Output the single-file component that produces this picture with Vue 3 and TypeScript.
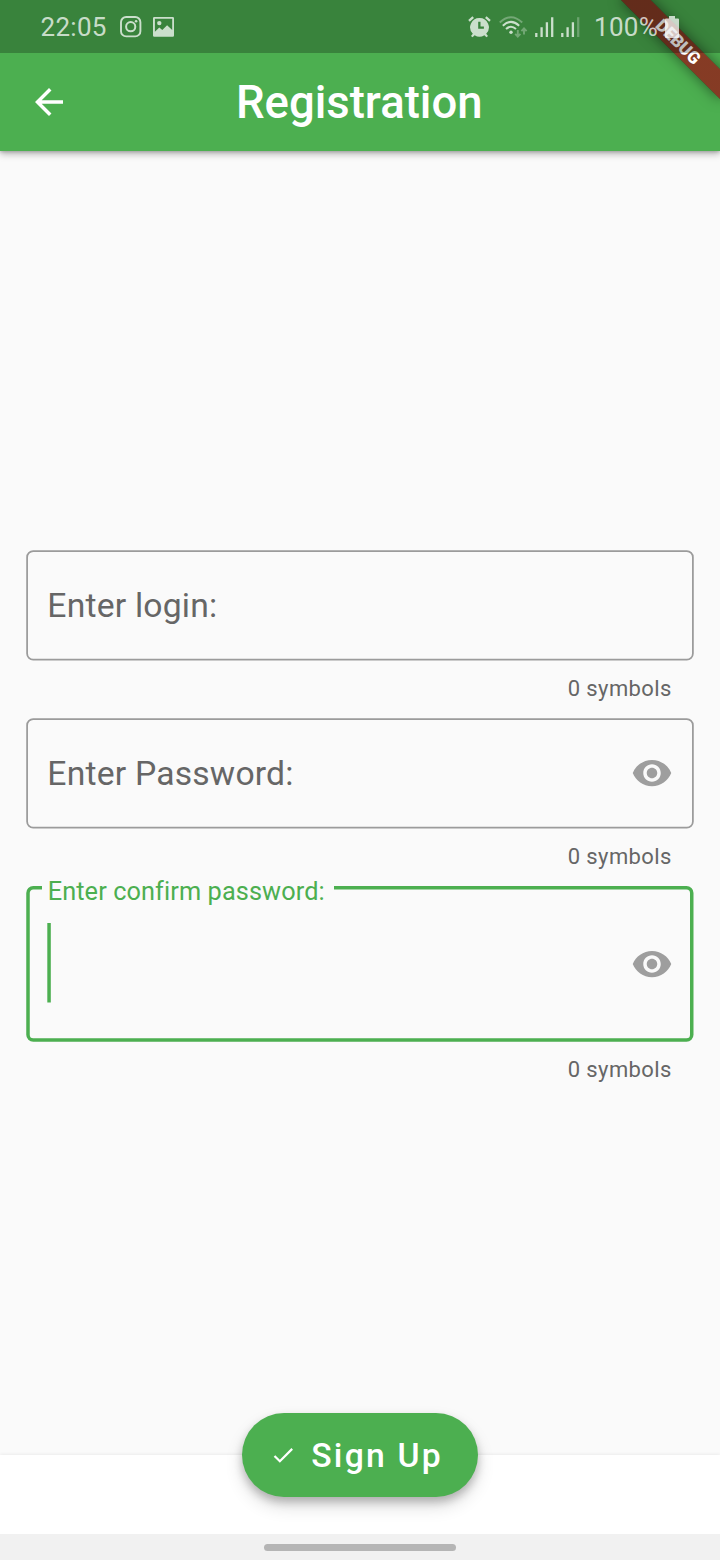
<script setup lang="ts">
interface Field {
  id: string
  label: string
  height: number
  secret: boolean
  focused: boolean
  counter: string
}

const fields: Field[] = [
  { id: 'login', label: 'Enter login:', height: 110.5, secret: false, focused: false, counter: '0 symbols' },
  { id: 'password', label: 'Enter Password:', height: 110.5, secret: true, focused: false, counter: '0 symbols' },
  { id: 'confirm', label: 'Enter confirm password:', height: 156, secret: true, focused: true, counter: '0 symbols' },
]
</script>

<template>
  <div class="screen">
    <div class="banner"><span>DEBUG</span></div>

    <header class="status">
      <span class="clock">22:05</span>
      <svg class="insta" width="22" height="22" viewBox="0 0 22 22" fill="none" stroke="currentColor">
        <rect x="1" y="1" width="19.4" height="19.4" rx="5.2" stroke-width="1.9" />
        <circle cx="10.7" cy="10.7" r="4.6" stroke-width="2" />
        <circle cx="16.1" cy="5.2" r="1.3" fill="currentColor" stroke="none" />
      </svg>
      <svg class="photo" width="22" height="21" viewBox="0 0 22 21" fill="currentColor">
        <path fill-rule="evenodd" d="M1.2 0H19.8Q21 0 21 1.2V18.6Q21 19.8 19.8 19.8H1.2Q0 19.8 0 18.6V1.2Q0 0 1.2 0ZM1.9 1.8V14.8L6.3 10.5L9.3 13.1L14.1 8.3L19.2 12.9V1.8Z" />
        <circle cx="6.3" cy="6.1" r="2.2" />
      </svg>
      <span class="spacer"></span>
      <svg class="alarm" width="24" height="22" viewBox="0 0 24 22">
        <path fill="currentColor" fill-rule="evenodd" d="M11.5 2A9.3 9.3 0 0 1 18.2 17.8L20 20L18.4 21.3L16.4 19.2A9.3 9.3 0 0 1 6.6 19.2L4.6 21.3L3 20L4.8 17.8A9.3 9.3 0 0 1 11.5 2ZM10.2 5.8V12.8H15.9V10.6H12.5V5.8Z" />
        <path d="M1 4.8L5.2 1.2M22 4.8L17.8 1.2" stroke="currentColor" stroke-width="2.4" fill="none" />
      </svg>
      <svg class="wifi" width="29" height="23" viewBox="0 0 29 23" fill="none" stroke="currentColor" stroke-width="2">
        <path opacity=".4" d="M.8 6.5Q12 -4 23.2 6.5" />
        <path d="M3.8 9.7Q12 2 20.2 9.7" />
        <path d="M7 13Q12 8.5 17 13" />
        <circle cx="12" cy="16.3" r="1.7" fill="currentColor" stroke="none" />
        <g opacity=".4" stroke-width="1.9"><path d="M18.8 14V20.5M16.2 17.8L18.8 20.6L21.4 17.8" /><path d="M25 18.5V12.5M22.4 15.2L25 12.4L27.6 15.2" /></g>
      </svg>
      <svg class="bars first" width="19" height="21" viewBox="0 0 19 21" stroke="currentColor" stroke-width="2.3">
        <path d="M1.3 16V20M6.6 10.2V20M11.9 5.2V20M17.2 .2V20" />
      </svg>
      <svg class="bars" width="19" height="21" viewBox="0 0 19 21" stroke="currentColor" stroke-width="2.3">
        <path d="M1.3 16V20M6.6 10.2V20M11.9 5.2V20" /><path opacity=".35" d="M17.2 .2V20" />
      </svg>
      <span class="percent">100%</span>
      <svg class="battery" width="15" height="22" viewBox="0 0 15 22" fill="currentColor">
        <path d="M4 0H10V2.5H13Q14 2.5 14 3.5V21Q14 22 13 22H1Q0 22 0 21V3.5Q0 2.5 1 2.5H4Z" />
      </svg>
    </header>

    <div class="appbar">
      <svg class="back" width="42" height="42" viewBox="0 0 24 24" fill="#fff">
        <path d="M20 11H7.83l5.59-5.59L12 4l-8 8 8 8 1.41-1.41L7.83 13H20v-2z" />
      </svg>
      <h1>Registration</h1>
    </div>

    <main>
      <div v-for="f in fields" :key="f.id" class="field" :class="{ focused: f.focused }">
        <div class="box" :style="{ height: f.height + 'px' }">
          <svg class="outline" width="668" :height="f.height" fill="none">
            <path v-if="f.focused" d="M308 1.75H660.5a5.25 5.25 0 0 1 5.25 5.25V148.7a5.25 5.25 0 0 1-5.25 5.25H7.25a5.25 5.25 0 0 1-5.25-5.25V7a5.25 5.25 0 0 1 5.25-5.25H16" stroke="#4caf50" stroke-width="3.5" />
            <rect v-else x="1.1" y="1.05" width="665.8" height="108.6" rx="6.1" stroke="#9b9b9b" stroke-width="1.75" />
          </svg>
          <span class="label">{{ f.label }}</span>
          <svg v-if="f.focused" class="caret" width="4" height="80"><rect x=".3" width="3.5" height="79.5" fill="#4caf50" /></svg>
          <svg v-if="f.secret" class="eye" width="42" height="42" viewBox="0 0 24 24" fill="#9e9e9e">
            <path d="M12 4.5C7 4.5 2.73 7.61 1 12c1.73 4.39 6 7.5 11 7.5s9.27-3.11 11-7.5c-1.73-4.39-6-7.5-11-7.5zM12 17c-2.76 0-5-2.24-5-5s2.24-5 5-5 5 2.24 5 5-2.24 5-5 5zm0-8c-1.66 0-3 1.34-3 3s1.34 3 3 3 3-1.34 3-3-1.34-3-3-3z" />
          </svg>
        </div>
        <div class="counter">{{ f.counter }}</div>
      </div>
    </main>

    <footer class="bottombar">
      <button class="signup" type="button">
        <svg width="26.25" height="26.25" viewBox="0 0 24 24" fill="#fff">
          <path d="M9 16.17L4.83 12l-1.42 1.41L9 19 21 7l-1.41-1.41z" />
        </svg>
        <span>Sign Up</span>
      </button>
    </footer>
    <div class="navbar"><span class="handle"></span></div>
  </div>
</template>

<style>
body {
  margin: 0;
  background: #fafafa;
}
</style>

<style scoped>
.screen {
  position: relative;
  display: flex;
  flex-direction: column;
  width: 720px;
  height: 1560px;
  overflow: hidden;
  background: #fafafa;
  font-family: Roboto, "Liberation Sans", sans-serif;
}
.screen svg {
  display: block;
  flex: none;
}
.status {
  position: relative;
  z-index: 4;
  display: flex;
  align-items: flex-start;
  box-sizing: border-box;
  height: 53px;
  padding: 16px 40px 0 40.5px;
  background: rgba(0, 0, 0, 0.25);
  color: rgba(255, 255, 255, 0.74);
  font-size: 26px;
  line-height: 22px;
}
.clock {
  width: 79px;
  letter-spacing: 0.3px;
}
.photo {
  margin: 1px 0 0 11px;
}
.spacer {
  flex: 1;
}
.wifi {
  margin-left: 7.5px;
}
.bars {
  margin: 1px 0 0 7px;
}
.percent {
  width: 71px;
  margin-left: 14px;
  letter-spacing: 0.3px;
  white-space: nowrap;
}
.appbar {
  position: relative;
  z-index: 2;
  display: flex;
  align-items: center;
  box-sizing: border-box;
  height: 151px;
  margin-top: -53px;
  padding: 53px 28px 0;
  background: #4caf50;
  box-shadow: 0 3px 7px rgba(0, 0, 0, 0.28), 0 1px 3px rgba(0, 0, 0, 0.18);
}
h1 {
  flex: 1;
  margin: 0 43.5px 0 0;
  padding-top: 2px;
  color: #fff;
  font-size: 45.5px;
  font-weight: 500;
  line-height: 54px;
  text-align: center;
}
.banner {
  position: absolute;
  z-index: 3;
  top: 49px;
  left: 650px;
  display: flex;
  align-items: center;
  justify-content: center;
  width: 140px;
  height: 20.5px;
  background: linear-gradient(rgba(183, 28, 28, 0.63), rgba(183, 28, 28, 0.63)), rgba(0, 0, 0, 0.36);
  box-shadow: 0 0 14px rgba(0, 0, 0, 0.5);
  color: #fff;
  font-size: 17.3px;
  font-weight: 900;
  line-height: 21px;
  transform: rotate(45deg);
  transform-origin: 70px -49px;
}
main {
  display: flex;
  flex: 1;
  flex-direction: column;
  padding: 399px 26px 0;
}
.field {
  height: 168px;
}
.box {
  position: relative;
  display: flex;
  align-items: center;
  justify-content: space-between;
  box-sizing: border-box;
  padding: 0 21.3px 0 21.3px;
}
.outline {
  position: absolute;
  inset: 0;
}
.label {
  padding-top: 2px;
  color: #666;
  font-size: 33.7px;
  letter-spacing: 0.2px;
  line-height: 40px;
}
.eye {
  position: relative;
}
.focused .label {
  position: absolute;
  top: -12px;
  left: 21.7px;
  color: #4caf50;
  font-size: 25.3px;
  letter-spacing: 0.1px;
  line-height: 32px;
}
.caret {
  position: relative;
  top: -1px;
  margin-left: -0.6px;
}
.counter {
  padding: 14px 22.2px 0 0;
  color: #666;
  font-size: 22px;
  letter-spacing: 0.4px;
  line-height: 28px;
  text-align: right;
}
.bottombar {
  position: relative;
  height: 79px;
  background: #fff;
  box-shadow: 0 -1px 3px rgba(0, 0, 0, 0.06);
}
.signup {
  position: absolute;
  top: -42px;
  left: 242px;
  display: flex;
  align-items: center;
  box-sizing: border-box;
  width: 236px;
  height: 84px;
  padding: 0 0 0 28px;
  border: 0;
  border-radius: 42px;
  background: #4caf50;
  box-shadow: 0 5px 9px rgba(0, 0, 0, 0.22), 0 9px 18px rgba(0, 0, 0, 0.14);
  color: #fff;
  font-family: inherit;
  font-size: 33.7px;
  font-weight: 500;
  letter-spacing: 2.2px;
  white-space: nowrap;
}
.signup span {
  margin-left: 15px;
}
.navbar {
  position: relative;
  display: flex;
  justify-content: center;
  box-sizing: border-box;
  height: 26px;
  padding-top: 10px;
  background: #f1f1f1;
}
.handle {
  width: 192px;
  height: 7px;
  border-radius: 3.5px;
  background: #b5b5b5;
}
</style>
